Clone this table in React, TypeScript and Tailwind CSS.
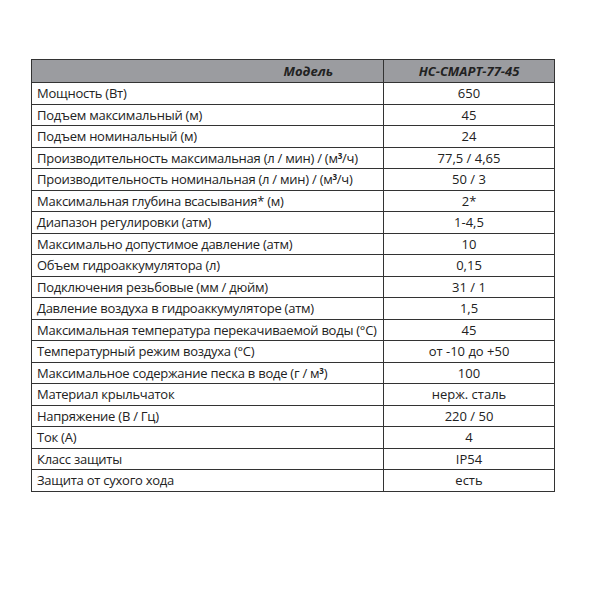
import React from "react";

const rows: [React.ReactNode, string][] = [
  ["Мощность (Вт)", "650"],
  ["Подъем максимальный (м)", "45"],
  ["Подъем номинальный (м)", "24"],
  [<>Производительность максимальная (л / мин) / (м<sup className="text-[8px] font-bold">3</sup>/ч)</>, "77,5 / 4,65"],
  [<>Производительность номинальная (л / мин) / (м<sup className="text-[8px] font-bold">3</sup>/ч)</>, "50 / 3"],
  ["Максимальная глубина всасывания* (м)", "2*"],
  ["Диапазон регулировки (атм)", "1-4,5"],
  ["Максимально допустимое давление (атм)", "10"],
  ["Объем гидроаккумулятора (л)", "0,15"],
  ["Подключения резьбовые (мм / дюйм)", "31 / 1"],
  ["Давление воздуха в гидроаккумуляторе (атм)", "1,5"],
  ["Максимальная температура перекачиваемой воды (°C)", "45"],
  ["Температурный режим воздуха (°C)", "от -10 до +50"],
  [<>Максимальное содержание песка в воде (г / м<sup className="text-[8px] font-bold">3</sup>)</>, "100"],
  ["Материал крыльчаток", "нерж. сталь"],
  ["Напряжение (В / Гц)", "220 / 50"],
  ["Ток (А)", "4"],
  ["Класс защиты", "IP54"],
  ["Защита от сухого хода", "есть"],
];

export default function App() {
  return (
    <div className="w-[598px] h-[600px] bg-white pt-[59px] pl-[31px]" style={{ fontFamily: '"Open Sans", sans-serif' }}>
      <table className="border-collapse table-fixed w-[523px] text-[13px] text-[#222] leading-none">
        <colgroup>
          <col className="w-[352px]" />
          <col className="w-[171px]" />
        </colgroup>
        <tbody>
          <tr className="h-[23px] bg-[#9b9ca0]">
            <td className="border border-[#333] text-right pr-[50px] font-bold italic">Модель</td>
            <td className="border border-[#333] text-center font-bold italic">НС-СМАРТ-77-45</td>
          </tr>
          {rows.map(([k, v], i) => (
            <tr key={i} className={i % 2 === 0 ? "h-[22px]" : "h-[21px]"}>
              <td className="border border-[#333] pl-[5px] tracking-[-0.25px] whitespace-nowrap">{k}</td>
              <td className="border border-[#333] text-center whitespace-nowrap">{v}</td>
            </tr>
          ))}
        </tbody>
      </table>
    </div>
  );
}
